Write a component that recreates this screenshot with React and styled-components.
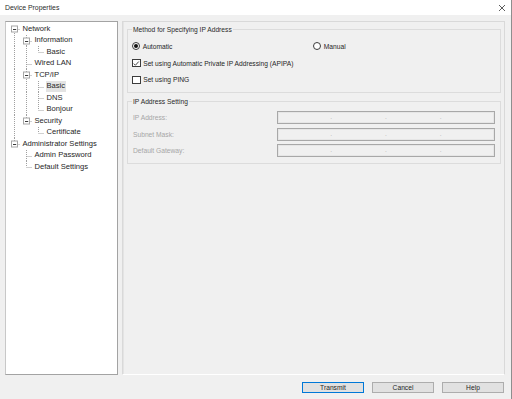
import React from 'react';
import styled, { createGlobalStyle } from 'styled-components';

const GlobalStyle = createGlobalStyle`
  html, body { margin: 0; padding: 0; background: #f0f0f0; }
  body { font-family: "Liberation Sans", Arial, sans-serif; }
  * { box-sizing: border-box; }
`;

const Window = styled.div`
  width: 512px;
  height: 399px;
  background: #f0f0f0;
  border-right: 1px solid #8e8e8e;
  display: flex;
  flex-direction: column;
  overflow: hidden;
`;

const TitleBar = styled.div`
  height: 15px;
  background: #fff;
  display: flex;
  align-items: center;
  justify-content: space-between;
  padding: 0 6px 0 5px;
  font-size: 6.9px;
  color: #2b2b2b;
`;

const Body = styled.div`
  display: flex;
  gap: 4px;
  margin-top: 6px;
  height: 354px;
  padding: 0 6px 0 5px;
`;

const TreePanel = styled.div`
  width: 113px;
  flex: none;
  background: #fff;
  border: 1px solid #a3a3a3;
  border-left-color: #c8c8c8;
  padding: 1px 0 0 2px;
  font-size: 7.6px;
  color: #262626;
`;

const TreeRow = styled.div`
  display: flex;
  align-items: center;
  height: 11.5px;
`;

const TreeLabel = styled.span`
  margin-left: 1.5px;
  padding: 0 1px;
  line-height: 10.5px;
  white-space: nowrap;
  background: ${p => (p.$selected ? '#e3e3e3' : 'transparent')};
`;

const ContentPanel = styled.div`
  flex: 1;
  border: 1px solid #d9d9d9;
  border-bottom-color: #ffffff;
  box-shadow: inset 1px 0 0 #e4e4e4;
  padding: 3px 3px 0 4px;
  font-size: 6.7px;
  color: #262626;
`;

const Group = styled.fieldset`
  margin: ${p => p.$top || 0}px 0 0 0;
  padding: ${p => p.$pad};
  border: 1px solid #dcdcdc;
  min-width: 0;
`;

const Legend = styled.legend`
  padding: 0 1px;
  margin-left: -1px;
  line-height: 9px;
  font-size: 6.7px;
  color: #2a2a2a;
`;

const OptionRow = styled.div`
  display: grid;
  grid-template-columns: ${p => p.$cols || '1fr'};
  align-items: center;
  height: 16.75px;
  margin-left: -1px;
`;

const Choice = styled.label`
  display: flex;
  align-items: center;
  gap: 2.7px;
  white-space: nowrap;
`;

const RadioCircle = styled.span`
  width: 8px;
  height: 8px;
  border-radius: 50%;
  border: 1px solid #3c3c3c;
  background: #fff;
  display: flex;
  align-items: center;
  justify-content: center;
  flex: none;
  &::after {
    content: '';
    width: 4px;
    height: 4px;
    border-radius: 50%;
    background: ${p => (p.$checked ? '#111' : 'transparent')};
  }
`;

const CheckSquare = styled.span`
  width: 8.5px;
  height: 8.5px;
  border: 1px solid #3c3c3c;
  background: #fff;
  display: flex;
  align-items: center;
  justify-content: center;
  flex: none;
`;

const FieldGrid = styled.div`
  display: grid;
  grid-template-columns: 144px 1fr;
  row-gap: 3.5px;
  align-items: center;
`;

const FieldLabel = styled.span`
  color: #a6a6a6;
  white-space: nowrap;
`;

const IpBox = styled.div`
  height: 13px;
  border: 1px solid #a8a8a8;
  box-shadow: inset 0 0 0 1px #e6e6e6;
  background: #f0f0f0;
  display: flex;
  align-items: flex-end;
  padding-bottom: 3px;
`;

const IpSegment = styled.span`
  flex: 1;
`;

const IpDot = styled.span`
  width: 3px;
  text-align: center;
  color: #b5b5b5;
  font-size: 6.7px;
  line-height: 7px;
`;

const Footer = styled.div`
  display: flex;
  justify-content: flex-end;
  gap: 8px;
  padding: 6.7px 7px 0 0;
`;

const Button = styled.button`
  width: 62px;
  height: 11.5px;
  padding: 0;
  font-family: "Liberation Sans", Arial, sans-serif;
  font-size: 6.7px;
  line-height: 9px;
  color: #262626;
  background: #e1e1e1;
  border: 1px solid ${p => (p.$default ? '#0078d7' : '#adadad')};
`;

const LINE = '#a0a0a0';

function TreeCell({ type, box }) {
  const cx = 6.5;
  const cy = 6;
  return (
    <svg width="12" height="11.5" viewBox="0 0 12 11.5" style={{ flex: 'none', display: 'block' }}>
      {(type === 'pipe' || type === 'tee') && (
        <line x1={cx} y1="0" x2={cx} y2="11.5" stroke={LINE} strokeWidth="1" strokeDasharray="1 1" />
      )}
      {type === 'elbow' && (
        <line x1={cx} y1="0" x2={cx} y2={cy} stroke={LINE} strokeWidth="1" strokeDasharray="1 1" />
      )}
      {type === 'first' && (
        <line x1={cx} y1={cy} x2={cx} y2="11.5" stroke={LINE} strokeWidth="1" strokeDasharray="1 1" />
      )}
      {(type === 'tee' || type === 'elbow' || type === 'first') && (
        <line x1={cx} y1={cy + 0.5} x2="12" y2={cy + 0.5} stroke={LINE} strokeWidth="1" strokeDasharray="1 1" />
      )}
      {box && (
        <g>
          <rect x="3.5" y="3" width="6" height="6" fill="#fff" stroke="#a6a6a6" strokeWidth="1" />
          <line x1="5" y1="6.5" x2="8.2" y2="6.5" stroke="#3a3a3a" strokeWidth="1" />
        </g>
      )}
    </svg>
  );
}

const treeRows = [
  { label: 'Network', guides: [], conn: 'first', box: true },
  { label: 'Information', guides: ['pipe'], conn: 'tee', box: true },
  { label: 'Basic', guides: ['pipe', 'pipe'], conn: 'elbow' },
  { label: 'Wired LAN', guides: ['pipe'], conn: 'tee' },
  { label: 'TCP/IP', guides: ['pipe'], conn: 'tee', box: true },
  { label: 'Basic', guides: ['pipe', 'pipe'], conn: 'tee', selected: true },
  { label: 'DNS', guides: ['pipe', 'pipe'], conn: 'tee' },
  { label: 'Bonjour', guides: ['pipe', 'pipe'], conn: 'elbow' },
  { label: 'Security', guides: ['pipe'], conn: 'elbow', box: true },
  { label: 'Certificate', guides: ['pipe', 'blank'], conn: 'elbow' },
  { label: 'Administrator Settings', guides: [], conn: 'elbow', box: true },
  { label: 'Admin Password', guides: ['blank'], conn: 'tee' },
  { label: 'Default Settings', guides: ['blank'], conn: 'elbow' },
];

function IpField() {
  return (
    <IpBox>
      <IpSegment />
      <IpDot>.</IpDot>
      <IpSegment />
      <IpDot>.</IpDot>
      <IpSegment />
      <IpDot>.</IpDot>
      <IpSegment />
    </IpBox>
  );
}

function CheckMark() {
  return (
    <svg width="7" height="7" viewBox="0 0 7 7">
      <polyline points="0.8,3.6 2.6,5.4 6.2,1.4" fill="none" stroke="#222" strokeWidth="0.9" />
    </svg>
  );
}

export default function App() {
  return (
    <>
      <GlobalStyle />
      <Window>
        <TitleBar>
          <span>Device Properties</span>
          <svg width="6" height="6" viewBox="0 0 6 6">
            <line x1="0" y1="0" x2="6" y2="6" stroke="#333" strokeWidth="0.8" />
            <line x1="6" y1="0" x2="0" y2="6" stroke="#333" strokeWidth="0.8" />
          </svg>
        </TitleBar>
        <Body>
          <TreePanel>
            {treeRows.map((r, i) => (
              <TreeRow key={i}>
                {r.guides.map((g, j) => (
                  <TreeCell key={j} type={g} />
                ))}
                <TreeCell type={r.conn} box={r.box} />
                <TreeLabel $selected={r.selected}>{r.label}</TreeLabel>
              </TreeRow>
            ))}
          </TreePanel>
          <ContentPanel>
            <Group $pad="4px 5px 4px 5px">
              <Legend>Method for Specifying IP Address</Legend>
              <OptionRow $cols="181px 1fr">
                <Choice>
                  <RadioCircle $checked />
                  Automatic
                </Choice>
                <Choice>
                  <RadioCircle />
                  Manual
                </Choice>
              </OptionRow>
              <OptionRow>
                <Choice>
                  <CheckSquare>
                    <CheckMark />
                  </CheckSquare>
                  Set using Automatic Private IP Addressing (APIPA)
                </Choice>
              </OptionRow>
              <OptionRow>
                <Choice>
                  <CheckSquare />
                  Set using PING
                </Choice>
              </OptionRow>
            </Group>
            <Group $top={4} $pad="4.8px 5px 6px 5px">
              <Legend>IP Address Setting</Legend>
              <FieldGrid>
                <FieldLabel>IP Address:</FieldLabel>
                <IpField />
                <FieldLabel>Subnet Mask:</FieldLabel>
                <IpField />
                <FieldLabel>Default Gateway:</FieldLabel>
                <IpField />
              </FieldGrid>
            </Group>
          </ContentPanel>
        </Body>
        <Footer>
          <Button $default>Transmit</Button>
          <Button>Cancel</Button>
          <Button>Help</Button>
        </Footer>
      </Window>
    </>
  );
}
